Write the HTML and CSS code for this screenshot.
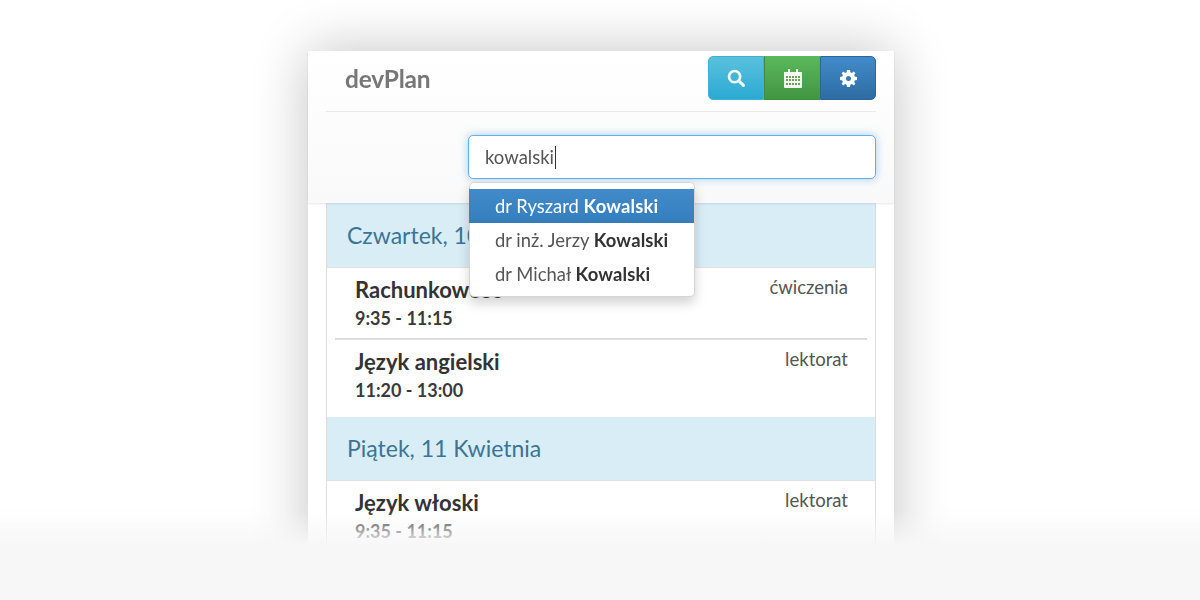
FILE: index.html
```html
<!DOCTYPE html>
<html lang="pl">
<head>
<meta charset="utf-8">
<title>devPlan</title>
<link rel="stylesheet" href="styles.css">
</head>
<body>
<div class="stage">
  <div class="phone">
    <header class="head">
      <div class="topbar">
        <span class="brand">devPlan</span>
        <div class="btns">
          <button class="btn info" aria-label="Szukaj"><svg width="20" height="20" viewBox="0 0 20 20"><circle cx="8.6" cy="8.6" r="5.6" fill="none" stroke="#fff" stroke-width="2.6"/><path d="M12.8 12.8l4.6 4.6" stroke="#fff" stroke-width="3" stroke-linecap="round"/></svg></button>
          <button class="btn success" aria-label="Kalendarz"><svg width="18" height="19" viewBox="0 0 18 19"><path d="M0 3h18v15a1 1 0 0 1-1 1H1a1 1 0 0 1-1-1z" fill="#f4f8f0"/><path d="M4 0h2v5H4zM12 0h2v5h-2z" fill="#fff"/><path d="M2 7h2v2H2zM5 7h2v2H5zM8 7h2v2H8zM11 7h2v2h-2zM14 7h2v2h-2zM2 10h2v2H2zM5 10h2v2H5zM8 10h2v2H8zM11 10h2v2h-2zM14 10h2v2h-2zM2 14h2v2H2zM5 14h2v2H5zM8 14h2v2H8zM11 14h2v2h-2zM14 14h2v2h-2z" fill="#6f9f5f"/></svg></button>
          <button class="btn primary" aria-label="Ustawienia"><svg width="17" height="17" viewBox="0 0 17 17"><path fill="#fff" fill-rule="evenodd" d="M7 0h3l.4 2.3 1.5.6L13.8 1.6 15.4 3.2 14.1 5.1l.6 1.5L17 7v3l-2.3.4-.6 1.5 1.3 1.9-1.6 1.6-1.9-1.3-1.5.6L10 17H7l-.4-2.3-1.5-.6-1.9 1.3-1.6-1.6 1.3-1.9-.6-1.5L0 10V7l2.3-.4.6-1.5L1.6 3.2 3.2 1.6 5.1 2.9l1.5-.6zM8.5 6a2.5 2.5 0 1 0 0 5 2.5 2.5 0 0 0 0-5z"/></svg></button>
        </div>
      </div>
      <div class="searchrow">
        <div class="field">kowalski<span class="caret"></span></div>
      </div>
    </header>
    <main class="panel">
      <h2 class="day">Czwartek, 10 Kwietnia</h2>
      <article class="item">
        <div><h3 class="name">Rachunkowość</h3><p class="time">9:35 - 11:15</p></div>
        <span class="type">ćwiczenia</span>
      </article>
      <article class="item">
        <div><h3 class="name">Język angielski</h3><p class="time">11:20 - 13:00</p></div>
        <span class="type">lektorat</span>
      </article>
      <h2 class="day">Piątek, 11 Kwietnia</h2>
      <article class="item">
        <div><h3 class="name">Język włoski</h3><p class="time">9:35 - 11:15</p></div>
        <span class="type">lektorat</span>
      </article>
    </main>
    <ul class="menu">
      <li class="opt active">dr Ryszard <b>Kowalski</b></li>
      <li class="opt">dr inż. Jerzy <b>Kowalski</b></li>
      <li class="opt">dr Michał <b>Kowalski</b></li>
    </ul>
  </div>
  <div class="fade"></div>
</div>
</body>
</html>
```
FILE: styles.css
```css
* { box-sizing: border-box; }
html, body { margin: 0; height: 100%; }
body { background: #fff; font-family: Lato, "Open Sans", sans-serif; overflow: hidden; }
.stage { position: relative; height: 600px; overflow: hidden; display: flex; justify-content: center; padding-left: 2px; filter: blur(.35px); }
.phone { position: relative; width: 586px; height: 640px; margin-top: 51px; background: #fff; box-shadow: 0 0 52px rgba(0,0,0,.24); }
.head { position: relative; z-index: 1; height: 152px; padding: 0 18px; background: linear-gradient(#fff, #f9f9f9); box-shadow: 0 1px 2px rgba(0,0,0,.1); }
.topbar { height: 61px; padding: 5px 0 0 19px; display: flex; justify-content: space-between; border-bottom: 1px solid #e9e9e9; }
.brand { font-size: 24.5px; line-height: 46px; height: 46px; font-weight: 700; color: #777; letter-spacing: -.2px; }
.btns { display: flex; height: 44px; }
.btn { width: 56px; height: 44px; padding: 0; display: flex; align-items: center; justify-content: center; border: 1px solid; }
.btn.info { border-radius: 5px 0 0 5px; background: linear-gradient(#5bc0de, #2aabd2); border-color: #3fb1d3; }
.btn.success { background: linear-gradient(#5cb85c, #419641); border-color: #3e8f3e; border-width: 0 0 1px 1px; }
.btn.success svg { margin-top: 1px; }
.btn.primary { border-radius: 0 5px 5px 0; background: linear-gradient(#428bca, #2d6ca2); border-color: #2b669a; }
.searchrow { display: flex; justify-content: flex-end; padding-top: 23px; }
.field { width: 408px; height: 44px; padding-left: 16px; font-size: 18.5px; line-height: 42px; color: #555; background: #fff; border: 1px solid #66afe9; border-radius: 5px; box-shadow: 0 0 8px rgba(102,175,233,.6); }
.caret { display: inline-block; width: 1px; height: 23px; margin-left: 1px; background: #333; vertical-align: -5px; }
.panel { width: 550px; margin: 0 0 0 18px; background: #fff; border-left: 1px solid #ddd; border-right: 1px solid #ddd; }
.day { height: 64px; margin: 0; padding: 0 20px; font-size: 23px; font-weight: 400; line-height: 62px; color: #3a7496; background: #d9edf7; border-bottom: 1px solid #e0e0e0; }
.day:first-child { height: 65px; padding-top: 1px; }
.item { position: relative; display: flex; justify-content: space-between; height: 71px; padding: 6px 27px 0 28px; }
.item + .item { height: 78px; padding-top: 7px; }
.item + .item::before { content: ""; position: absolute; top: -1px; left: 8px; right: 8px; height: 2px; background: #ddd; }
.name { margin: 0; font-size: 22px; line-height: 31px; font-weight: 700; color: #333; }
.time { margin: 1px 0 0; font-size: 18px; line-height: 24px; font-weight: 700; color: #3a3a3a; }
.type { font-size: 18.5px; line-height: 26px; color: #555; }
.menu { position: absolute; z-index: 2; left: 161px; top: 131px; width: 226px; height: 115px; margin: 0; padding: 6px 0 0; list-style: none; background: #fff; border: 1px solid #d5d5d5; border-radius: 5px; box-shadow: 0 6px 12px rgba(0,0,0,.18); }
.opt { height: 34px; padding-left: 25px; font-size: 18.4px; line-height: 35px; color: #555; white-space: nowrap; }
.opt b { color: #333; letter-spacing: .15px; }
.opt.active { margin-left: -1px; padding-left: 26px; color: #fff; background: linear-gradient(#428bca, #357ebd); }
.opt.active b { color: #fff; }
.fade { position: absolute; z-index: 3; left: 0; right: 0; top: 510px; height: 90px; background: linear-gradient(rgba(247,247,247,0), #f7f7f7 36px); }
```
